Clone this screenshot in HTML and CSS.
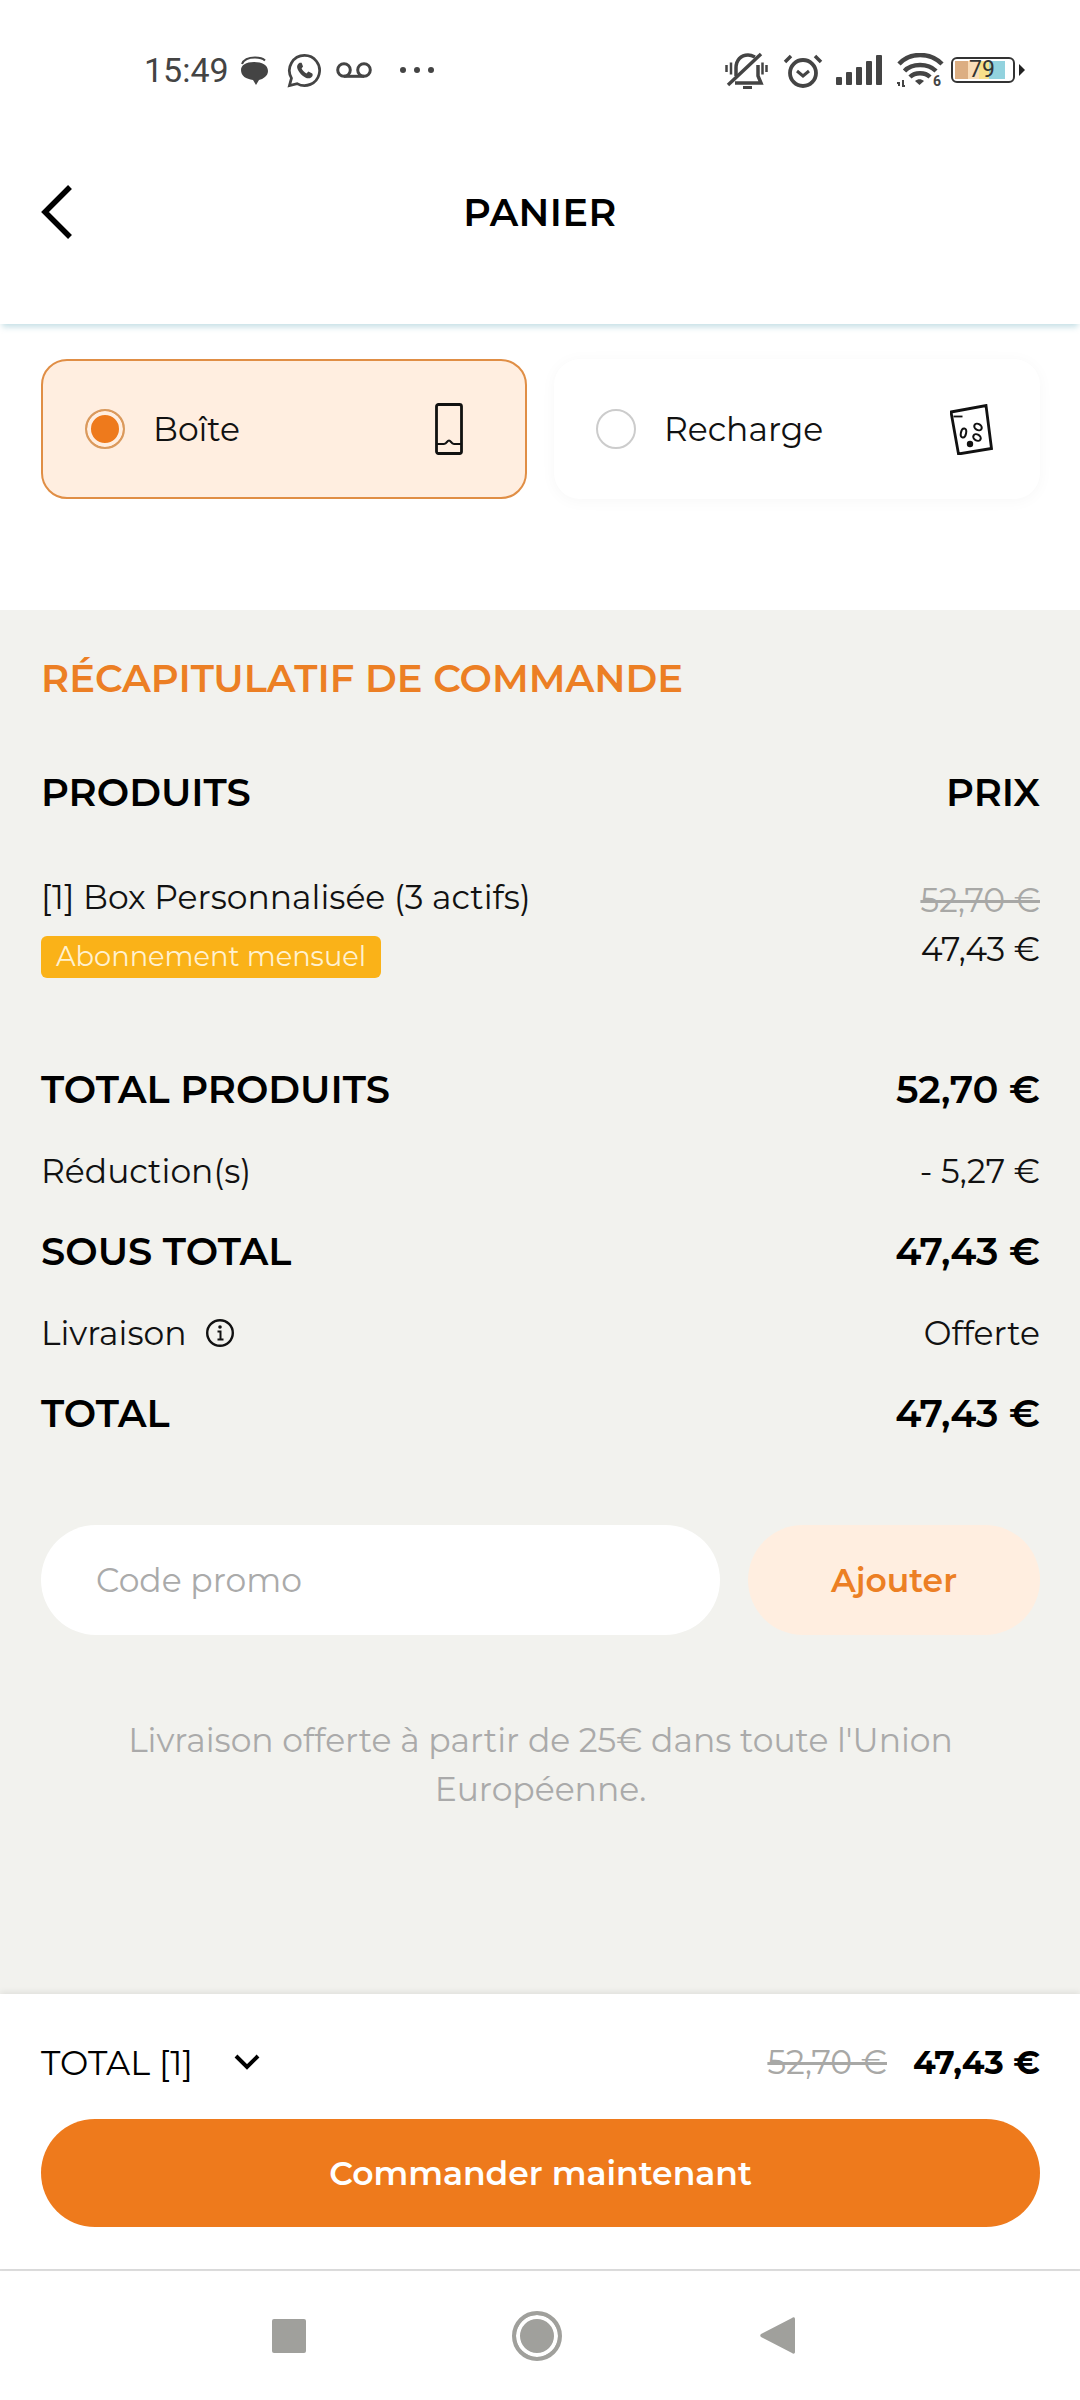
FILE: index.html
```html
<!DOCTYPE html>
<html lang="fr">
<head>
  <meta charset="UTF-8" />
  <title>Panier</title>
  <link rel="stylesheet" href="styles.css">
</head>
<body>

<div class="statusbar">
  <div class="status-left">
    <span class="time">15:49</span>
    <svg class="ic-bubble" viewBox="0 0 28 29"><path d="M2 8C4 3 9 1.500 15 1.500c4 0 8 1 10 3" fill="none" stroke="#444" stroke-width="2"/><path d="M14 6c8 0 14 3 14 9 0 5-5 8-9 9l-3 5-3-5C6 23 1 20 1 14 1 9 6 6 14 6z" fill="#444"/></svg>
    <svg class="ic-wa" viewBox="0 0 36 36"><path d="M18 2.500a15.500 15.500 0 0 0-13.400 23.300L2.500 33.500l7.900-2A15.500 15.500 0 1 0 18 2.500z" fill="none" stroke="#444" stroke-width="2.800"/><path d="M13 10c-2 1-3 3-2.500 5.500 1.500 5 5.500 8.500 10 10.500 3 .5 5.500-1 6-3.500l-.5-1.500-4-2-2 2c-2-1-4-3-5-5l1.500-2-1.500-4z" fill="#444"/></svg>
    <svg class="ic-vm" viewBox="0 0 36 16"><circle cx="8" cy="8" r="6.300" fill="none" stroke="#444" stroke-width="3"/><circle cx="28" cy="8" r="6.300" fill="none" stroke="#444" stroke-width="3"/><path d="M8 14.300h20" stroke="#444" stroke-width="3"/></svg>
    <span class="dots"><i></i><i></i><i></i></span>
  </div>
  <div class="status-right">
    <svg class="ic-bell" viewBox="0 0 43 37"><path d="M11 24v-8C11 8 16 3 23 3c3 0 5 1 7 2M33 13v11l3 7H10" fill="none" stroke="#444" stroke-width="3.500"/><path d="M3 33L36 2" stroke="#444" stroke-width="3.500"/><path d="M18 35.500h9" stroke="#444" stroke-width="3"/><path d="M1.500 13v7M6 10.500v12M37.500 10.500v12M41.500 13v7" stroke="#444" stroke-width="2.500"/></svg>
    <svg class="ic-alarm" viewBox="0 0 40 35"><circle cx="20" cy="20" r="13" fill="none" stroke="#444" stroke-width="3.800"/><path d="M14 18l6 5 6-5" fill="none" stroke="#444" stroke-width="3"/><path d="M2 9l6-6M38 9l-6-6" stroke="#444" stroke-width="3.500"/></svg>
    <span class="signal"><i></i><i></i><i></i><i></i><i></i></span>
    <svg class="ic-wifi" viewBox="0 0 48 38"><path d="M2 11C13 -1 33 -1 45 11M7.500 18C15 10 31 10 39 18M13 24c5-5 15-5 20 0" fill="none" stroke="#444" stroke-width="4.500"/><path d="M18 28c3-2.500 6-2.500 9 0l-4.500 4z" fill="#444"/><path d="M2 33v-3l-2 0M6 27v6l2 0" fill="none" stroke="#444" stroke-width="2"/><text class="wifi-six" x="36" y="33">6</text></svg>
    <div class="battery">
      <div class="battery-fill">
        <i class="seg-a"></i><i class="seg-b"></i><i class="seg-c"></i><i class="seg-d"></i>
        <span class="battery-num">79</span>
      </div>
    </div>
    <span class="battery-tip"></span>
  </div>
</div>

<header class="topbar">
  <svg class="back" viewBox="0 0 36 60"><path d="M31 5L6 30l25 25" fill="none" stroke="#000" stroke-width="5.500"/></svg>
  <h1>PANIER</h1>
  <span></span>
</header>

<section class="choices">
  <div class="choice selected">
    <span class="radio on"></span>
    <span class="choice-label">Boîte</span>
    <svg class="choice-ic" viewBox="0 0 28 52"><rect x="1.500" y="1.500" width="25" height="49" rx="2" fill="none" stroke="#111" stroke-width="2.800"/><path d="M2 41h7c3 0 3-3.500 5-3.500s2 3.500 5 3.500h7" fill="none" stroke="#111" stroke-width="2.200"/></svg>
  </div>
  <div class="choice">
    <span class="radio"></span>
    <span class="choice-label">Recharge</span>
    <svg class="choice-ic bag" viewBox="0 0 43 51"><path d="M1 8L36 1.500l5.500 43L8.500 50z" fill="none" stroke="#111" stroke-width="2.800"/><path d="M3.500 12.500h9" stroke="#111" stroke-width="1.800"/><ellipse cx="13.500" cy="29" rx="2.600" ry="4.500" transform="rotate(12 13.500 29)" fill="none" stroke="#111" stroke-width="2"/><ellipse cx="28" cy="23" rx="4" ry="3" transform="rotate(30 28 23)" fill="none" stroke="#111" stroke-width="2"/><ellipse cx="27" cy="33.500" rx="4" ry="3" transform="rotate(30 27 33.500)" fill="none" stroke="#111" stroke-width="2"/><circle cx="20" cy="40" r="3.200" fill="#111"/></svg>
  </div>
</section>

<main class="recap">
  <h2>RÉCAPITULATIF DE COMMANDE</h2>
  <div class="row head"><span>PRODUITS</span><span>PRIX</span></div>

  <div class="product">
    <div>
      <div class="product-name">[1] Box Personnalisée (3 actifs)</div>
      <div class="tag">Abonnement mensuel</div>
    </div>
    <div class="product-price">
      <s>52,70 €</s>
      <span>47,43 €</span>
    </div>
  </div>

  <div class="totals">
    <div class="row strong"><span>TOTAL PRODUITS</span><span>52,70 €</span></div>
    <div class="row"><span>Réduction(s)</span><span>- 5,27 €</span></div>
    <div class="row strong"><span>SOUS TOTAL</span><span>47,43 €</span></div>
    <div class="row">
      <span class="with-ic">Livraison
        <svg class="ic-info" viewBox="0 0 30 30"><circle cx="15" cy="15" r="12.800" fill="none" stroke="#111" stroke-width="2.400"/><path d="M12.500 13.500H15.500V21M12.500 21.500h6" fill="none" stroke="#111" stroke-width="2"/><circle cx="15" cy="9" r="1.800" fill="#111"/></svg>
      </span>
      <span>Offerte</span>
    </div>
    <div class="row strong"><span>TOTAL</span><span>47,43 €</span></div>
  </div>

  <div class="promo">
    <div class="promo-input">Code promo</div>
    <div class="promo-btn">Ajouter</div>
  </div>

  <p class="note">Livraison offerte à partir de 25€ dans toute l'Union Européenne.</p>
</main>

<section class="checkout">
  <div class="checkout-row">
    <span class="checkout-total">TOTAL [1]
      <svg class="chev" viewBox="0 0 28 18"><path d="M3 3l11 11L25 3" fill="none" stroke="#000" stroke-width="4"/></svg>
    </span>
    <span class="checkout-prices"><s>52,70 €</s><b>47,43 €</b></span>
  </div>
  <div class="cta">Commander maintenant</div>
</section>

<nav class="navbar">
  <span class="nav-square"></span>
  <span class="nav-circle"></span>
  <svg class="nav-back" viewBox="0 0 35 37"><path d="M35 2v33c0 2-2 2-3 1L1 20c-1-1-1-2 0-3L32 1c1-1 3-1 3 1z" fill="#a0a09c"/></svg>
</nav>

</body>
</html>
```
FILE: styles.css
```css
* { box-sizing: border-box; }

body {
  margin: 0;
  width: 1080px;
  height: 2400px;
  font-family: 'Montserrat', 'Inter', 'Noto Sans', sans-serif;
  color: #111;
  background: #fff;
  display: flex;
  flex-direction: column;
  overflow: hidden;
}

.statusbar {
  height: 100px;
  padding: 52px 55px 0 144px;
  display: flex;
  justify-content: space-between;
  align-items: flex-start;
  font-family: 'Roboto', sans-serif;
}

.status-left, .status-right {
  display: flex;
  align-items: center;
  height: 36px;
}

.time { font-size: 34px; color: #444; margin-right: 11px; }
.ic-bubble { width: 28px; height: 29px; margin-right: 19px; }
.ic-wa { width: 35px; height: 35px; margin-right: 14px; }
.ic-vm { width: 36px; height: 16px; margin-right: 28px; }

.dots { display: flex; gap: 8px; }
.dots i { width: 6px; height: 6px; border-radius: 50%; background: #444; }

.ic-bell { width: 43px; height: 37px; margin-right: 15px; }
.ic-alarm { width: 40px; height: 35px; margin-right: 13px; }

.signal { display: flex; align-items: flex-end; gap: 4px; height: 30px; margin-right: 15px; }
.signal i { width: 6px; background: #444; border-radius: 1px; }
.signal i:nth-child(1) { height: 8px; }
.signal i:nth-child(2) { height: 13px; }
.signal i:nth-child(3) { height: 18px; }
.signal i:nth-child(4) { height: 24px; }
.signal i:nth-child(5) { height: 30px; }

.ic-wifi { width: 48px; height: 38px; margin: 3px 6px 0 0; }
.wifi-six { font-size: 14px; font-weight: 700; fill: #444; }

.battery {
  width: 64px;
  height: 26px;
  border: 2px solid #333;
  border-radius: 6px;
  padding: 2px;
}
.battery-fill {
  position: relative;
  display: flex;
  width: 50px;
  height: 18px;
}
.battery-fill i { display: block; height: 100%; }
.seg-a { width: 13px; background: #dcae82; }
.seg-b { width: 11px; background: #f9dcb8; }
.seg-c { width: 10px; background: #f8e08a; }
.seg-d { width: 16px; background: #92d2de; }
.battery-num {
  position: absolute;
  left: 14px;
  top: 0;
  width: 24px;
  line-height: 18px;
  text-align: center;
  font-size: 23px;
  color: #333;
}
.battery-tip {
  width: 0;
  height: 0;
  margin-left: 4px;
  border-left: 6px solid #222;
  border-top: 6px solid transparent;
  border-bottom: 6px solid transparent;
}

.topbar {
  height: 224px;
  padding: 0 41px;
  display: grid;
  grid-template-columns: 1fr auto 1fr;
  align-items: center;
  box-shadow: 0 5px 6px -2px rgba(110, 175, 190, 0.4);
}
.topbar h1 { margin: 0; font-size: 38px; font-weight: 600; color: #000; letter-spacing: 0.5px; }
.back { width: 36px; height: 60px; margin-left: -2px; }

.choices {
  height: 286px;
  padding: 35px 40px 0 41px;
  display: flex;
  gap: 27px;
  align-items: flex-start;
}
.choice {
  flex: 1;
  height: 140px;
  border-radius: 26px;
  padding: 0 47px 0 42px;
  display: flex;
  align-items: center;
  background: #fff;
  box-shadow: 0 2px 16px rgba(0, 0, 0, 0.035);
}
.choice.selected {
  flex: 0 0 486px;
  padding-right: 62px;
  background: #ffeee0;
  border: 2px solid #e08e45;
  box-shadow: none;
}
.radio {
  width: 40px;
  height: 40px;
  border-radius: 50%;
  border: 2px solid #ccc;
  background: #fff;
  margin-right: 28px;
}
.radio.on {
  border-color: #d99a5e;
  background: #ee7a1c;
  box-shadow: inset 0 0 0 4px #ffeee0;
}
.choice-label { flex: 1; font-size: 33px; }
.choice-ic { width: 28px; height: 52px; }
.choice-ic.bag { width: 43px; height: 51px; }

.recap {
  flex: 1;
  background: #f2f2ee;
  padding: 47px 40px 0 41px;
}
.recap h2 { margin: 0 0 69px; font-size: 38.500px; font-weight: 600; color: #ec7f24; line-height: 44px; }

.row {
  display: flex;
  justify-content: space-between;
  align-items: center;
  font-size: 33px;
}
.row.head { font-size: 38.500px; font-weight: 600; color: #000; line-height: 46px; }
.row.strong { font-size: 38.500px; font-weight: 600; color: #000; }

.product {
  display: flex;
  justify-content: space-between;
  margin-top: 59px;
  font-size: 33px;
}
.product-name { line-height: 44px; }
.tag {
  width: fit-content;
  margin-top: 17px;
  padding: 0 15px;
  height: 42px;
  line-height: 42px;
  border-radius: 6px;
  background: #fab218;
  color: #fff1cf;
  font-size: 27.300px;
}
.product-price {
  display: flex;
  flex-direction: column;
  align-items: flex-end;
  gap: 5px;
  padding-top: 3px;
  line-height: 44px;
}
.product-price s, .checkout-prices s { color: #a8a8a6; }

.totals { margin-top: 89px; display: flex; flex-direction: column; gap: 35px; }
.totals .row { line-height: 46px; }
.with-ic { display: flex; align-items: center; gap: 18px; }
.ic-info { width: 30px; height: 30px; }

.promo { display: flex; gap: 28px; margin-top: 88px; }
.promo-input {
  flex: 1;
  height: 110px;
  line-height: 110px;
  border-radius: 55px;
  background: #fff;
  padding-left: 55px;
  font-size: 33px;
  color: #aaa;
}
.promo-btn {
  width: 292px;
  height: 110px;
  line-height: 110px;
  border-radius: 55px;
  background: #ffeee0;
  color: #ec7f24;
  text-align: center;
  font-size: 33px;
  font-weight: 600;
}

.note {
  margin: 81px 40px 0;
  text-align: center;
  font-size: 33px;
  line-height: 49px;
  color: #aaa;
}

.checkout {
  height: 275px;
  padding: 46px 40px 0 41px;
  background: #fff;
  box-shadow: 0 -2px 6px rgba(0, 0, 0, 0.08);
  position: relative;
}
.checkout-row { display: flex; justify-content: space-between; align-items: center; height: 44px; font-size: 33.700px; }
.checkout-total { display: flex; align-items: center; gap: 40px; color: #000; }
.chev { width: 28px; height: 18px; }
.checkout-prices { display: flex; gap: 26px; align-items: center; font-size: 33px; }
.checkout-prices b { color: #000; font-weight: 700; }
.cta {
  margin-top: 35px;
  height: 108px;
  line-height: 108px;
  border-radius: 54px;
  background: #ee7a1c;
  color: #fff;
  text-align: center;
  font-size: 33px;
  font-weight: 600;
}

.navbar {
  height: 131px;
  padding-right: 13px;
  border-top: 2px solid #ddd;
  background: #fff;
  display: flex;
  align-items: center;
  justify-content: center;
}
.nav-square { width: 34px; height: 34px; background: #a0a09c; border-radius: 2px; margin-right: 206px; }
.nav-circle {
  width: 50px;
  height: 50px;
  border-radius: 50%;
  background: #a0a09c;
  border: 4px solid #a0a09c;
  box-shadow: inset 0 0 0 4px #fff;
  margin-right: 198px;
}
.nav-back { width: 35px; height: 37px; }
```
